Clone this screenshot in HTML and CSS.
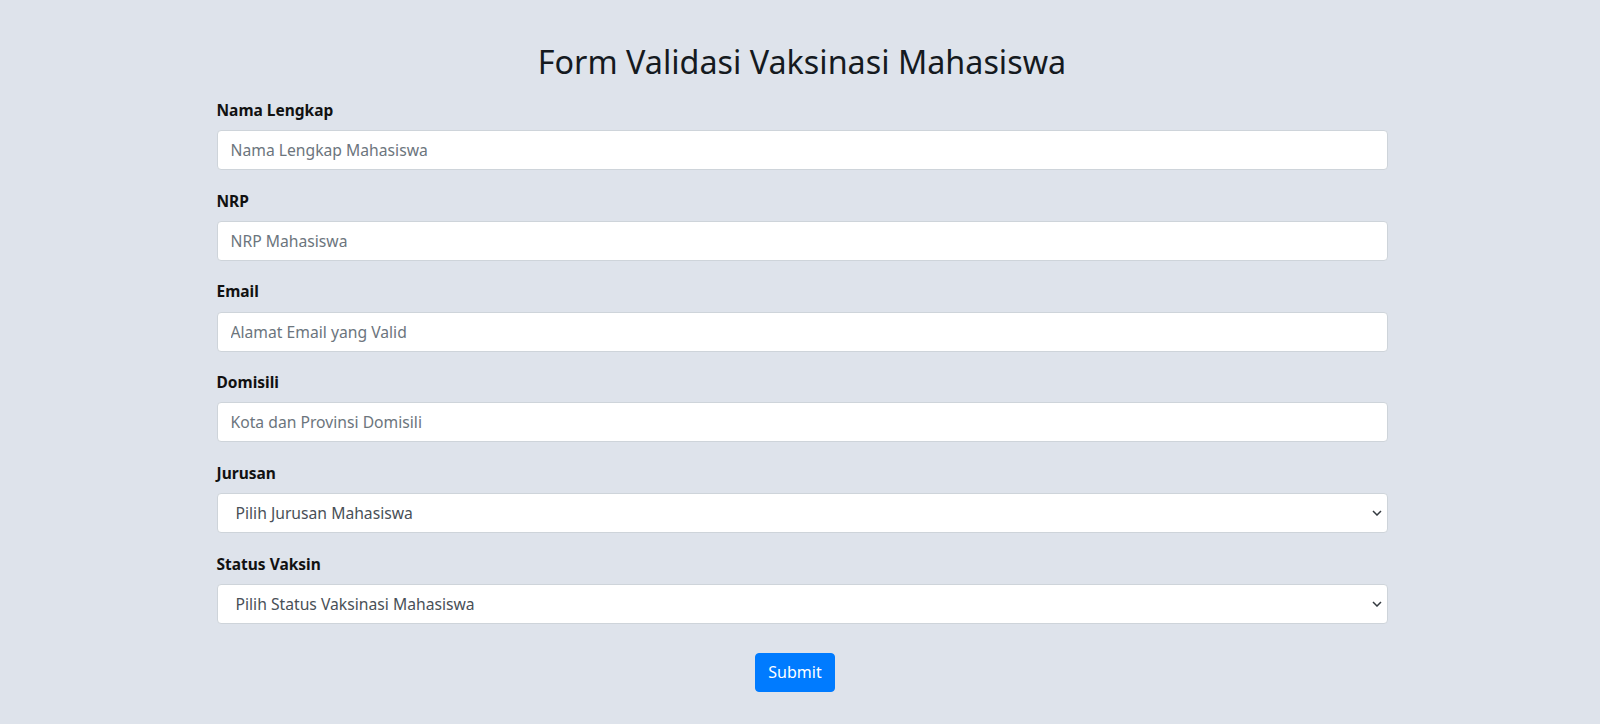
FILE: index.html
```html
<!DOCTYPE html>
<html lang="en">
<head>
    <meta charset="UTF-8">
    <meta name="viewport" content="width=device-width, initial-scale=1.0">
    <title>Form Validasi Vaksinasi Mahasiswa</title>
    <link rel="stylesheet" href="styles.css">
</head>
<body>

    <div class="container">
        <h1 class="title">Form Validasi Vaksinasi Mahasiswa</h1>

        <form id="vaksin-form">
            <div class="form-group">
                <label for="nama">Nama Lengkap</label>
                <input type="text" id="nama" class="form-control" placeholder="Nama Lengkap Mahasiswa">
            </div>
            <div class="form-group">
                <label for="nrp">NRP</label>
                <input type="text" id="nrp" class="form-control" placeholder="NRP Mahasiswa">
            </div>
            <div class="form-group">
                <label for="email">Email</label>
                <input type="email" id="email" class="form-control" placeholder="Alamat Email yang Valid">
            </div>
            <div class="form-group">
                <label for="domisili">Domisili</label>
                <input type="text" id="domisili" class="form-control" placeholder="Kota dan Provinsi Domisili">
            </div>
            <div class="form-group">
                <label for="jurusan">Jurusan</label>
                <select id="jurusan" class="form-control form-select">
                    <option selected disabled>Pilih Jurusan Mahasiswa</option>
                    <option>Informatika</option>
                    <option>Sistem Informasi</option>
                </select>
            </div>
            <div class="form-group">
                <label for="status">Status Vaksin</label>
                <select id="status" class="form-control form-select">
                    <option selected disabled>Pilih Status Vaksinasi Mahasiswa</option>
                    <option>Belum Vaksin</option>
                    <option>Vaksin Dosis 1</option>
                    <option>Vaksin Dosis 2</option>
                </select>
            </div>
            <div class="form-actions">
                <button type="submit" class="btn-submit">Submit</button>
            </div>
        </form>
    </div>

</body>
</html>
```

FILE: styles.css
```css
body {
    font-family: 'Noto Sans', 'Open Sans', sans-serif;
    margin: 0;
    padding: 0;
    background-color: #dee3eb;
    color: #212529;
    font-size: 16px;
    line-height: 1.5;
}

.container {
    width: 1171px;
    margin: 0 auto;
    padding-top: 42px;
    padding-left: 4px;
}

.title {
    font-size: 32.3px;
    font-weight: 400;
    line-height: 1.2;
    text-align: center;
    margin: 0 0 18px;
    color: #151a1f;
}

.form-group {
    margin-bottom: 19.5px;
}

label {
    display: block;
    font-weight: 700;
    font-size: 15.5px;
    margin-bottom: 8px;
    color: #111;
}

.form-control {
    display: block;
    width: 100%;
    height: 40px;
    padding: 6px 13px;
    font-family: inherit;
    font-size: 15.7px;
    color: #495057;
    background-color: #fff;
    border: 1px solid #ced4da;
    border-radius: 4px;
    box-sizing: border-box;
}

.form-control::placeholder {
    color: #6c757d;
}

.form-select {
    appearance: none;
    -webkit-appearance: none;
    padding-left: 18px;
    background-image: url("data:image/svg+xml,%3Csvg xmlns='http://www.w3.org/2000/svg' width='10' height='6' viewBox='0 0 10 6'%3E%3Cpath d='M1 1l4 4 4-4' fill='none' stroke='%23343a40' stroke-width='1.5'/%3E%3C/svg%3E");
    background-repeat: no-repeat;
    background-position: right 5px center;
    background-size: 10px 6px;
}

.form-actions {
    text-align: center;
    margin-top: 29px;
    padding-right: 14px;
}

.btn-submit {
    font-family: inherit;
    font-size: 16px;
    color: #fff;
    background-color: #007bff;
    border: 1px solid #007bff;
    border-radius: 4px;
    padding: 6px 12px;
    height: 39px;
    width: 80px;
    cursor: pointer;
}

.btn-submit:hover {
    background-color: #0069d9;
}
```
